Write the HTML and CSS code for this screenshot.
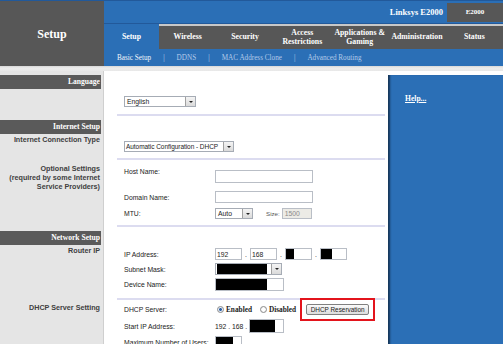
FILE: index.html
```html
<!DOCTYPE html>
<html lang="en">
<head>
    <meta charset="UTF-8">
    <title>Linksys E2000 - Basic Setup</title>
    <link rel="stylesheet" href="styles.css">
</head>
<body>

    <!-- Masthead: page title, model and tabs -->
    <header class="masthead">
        <div class="brand">Setup</div>
        <div class="nav">
            <div class="topbar">
                <span class="model">Linksys E2000</span>
                <span class="model-box">E2000</span>
            </div>
            <div class="tabs">
                <div class="tab active">Setup</div>
                <div class="tab">Wireless</div>
                <div class="tab">Security</div>
                <div class="tab">Access<br>Restrictions</div>
                <div class="tab">Applications &amp;<br>Gaming</div>
                <div class="tab">Administration</div>
                <div class="tab">Status</div>
            </div>
            <div class="subnav">
                <span class="current">Basic Setup</span>
                <span class="sep">|</span>
                <span>DDNS</span>
                <span class="sep">|</span>
                <span>MAC Address Clone</span>
                <span class="sep">|</span>
                <span>Advanced Routing</span>
            </div>
        </div>
    </header>

    <div class="strip"></div>

    <main class="settings">
        <aside class="help"><a href="#">Help...</a></aside>

        <!-- Language -->
        <div class="side">
            <div class="section-title">Language</div>
        </div>
        <div class="fields lang">
            <div class="select w-lang"><span class="value">English</span><span class="arrow"></span></div>
        </div>

        <!-- Internet setup -->
        <div class="side">
            <div class="section-title">Internet Setup</div>
            <div class="side-label">Internet Connection Type</div>
        </div>
        <div class="fields conn">
            <div class="select w-conn"><span class="value">Automatic Configuration - DHCP</span><span class="arrow"></span></div>
        </div>

        <div class="side">
            <div class="side-label optional">Optional Settings<br>(required by some Internet<br>Service Providers)</div>
        </div>
        <div class="fields optional-fields">
            <div class="row host">
                <label>Host Name:</label>
                <div class="box w-name"></div>
            </div>
            <div class="row domain">
                <label>Domain Name:</label>
                <div class="box w-name short"></div>
            </div>
            <div class="row mtu">
                <label>MTU:</label>
                <div class="select w-mtu"><span class="value">Auto</span><span class="arrow"></span></div>
                <span class="size-label">Size:</span>
                <div class="box disabled">1500</div>
            </div>
        </div>

        <!-- Network setup -->
        <div class="side">
            <div class="section-title">Network Setup</div>
            <div class="side-label">Router IP</div>
        </div>
        <div class="fields network">
            <div class="row ip">
                <label>IP Address:</label>
                <div class="box octet">192</div>
                <span class="dot">.</span>
                <div class="box octet">168</div>
                <span class="dot">.</span>
                <div class="box octet"><span class="redact r-3"></span></div>
                <span class="dot">.</span>
                <div class="box octet"><span class="redact r-4"></span></div>
            </div>
            <div class="row subnet">
                <label>Subnet Mask:</label>
                <div class="select w-mask"><span class="value"><span class="redact r-mask"></span></span><span class="arrow"></span></div>
            </div>
            <div class="row device">
                <label>Device Name:</label>
                <div class="box w-device"><span class="redact r-device"></span></div>
            </div>
        </div>

        <div class="side">
            <div class="side-label dhcp">DHCP Server Setting</div>
        </div>
        <div class="fields dhcp-fields">
            <div class="row server">
                <label>DHCP Server:</label>
                <span class="radio checked"></span><span class="radio-text">Enabled</span>
                <span class="radio off"></span><span class="radio-text">Disabled</span>
                <span class="highlight"><button class="reserve" type="button">DHCP Reservation</button></span>
            </div>
            <div class="row start">
                <label>Start IP Address:</label>
                <span class="prefix">192 . 168 .</span>
                <div class="box w-start"><span class="redact r-start"></span></div>
            </div>
            <div class="row users">
                <label>Maximum Number of Users:</label>
                <div class="box octet"><span class="redact r-users"></span></div>
            </div>
        </div>
    </main>

</body>
</html>
```

FILE: styles.css
```css
/* Colours */
:root {
    --blue: #2b6fb6;
    --blue-dark: #22599a;
    --gray: #575757;
    --side-bg: #e5e5e5;
    --rule: #dcdcf0;
}

body {
    margin: 0;
    width: 503px;
    height: 344px;
    overflow: hidden;
    background: #fff;
    font-family: "Liberation Sans", Arial, sans-serif;
    font-size: 6.8px;
    color: #222;
}

/* Masthead */
.masthead {
    display: flex;
    height: 65px;
    border-top: 1px solid var(--blue-dark);
}

.brand {
    width: 104px;
    background: var(--gray);
    color: #fff;
    font: bold 12px "Liberation Serif", serif;
    display: flex;
    align-items: center;
    justify-content: center;
    padding-top: 2px;
    box-sizing: border-box;
}

.nav {
    flex: 1;
    display: flex;
    flex-direction: column;
}

.topbar {
    height: 22px;
    background: var(--blue);
    border-bottom: 1px solid var(--blue-dark);
    display: flex;
    align-items: center;
    justify-content: flex-end;
}

.model {
    color: #fff;
    font: bold 8.5px "Liberation Serif", serif;
    margin-right: 4px;
}

.model-box {
    width: 56px;
    height: 19px;
    background: var(--gray);
    color: #fff;
    font: bold 7px "Liberation Serif", serif;
    display: flex;
    align-items: center;
    justify-content: center;
}

.tabs {
    height: 25px;
    display: flex;
}

.tab {
    flex: 1 1 0;
    background: var(--gray);
    border-top: 2px solid #c8c8c8;
    color: #fff;
    font: bold 7.8px "Liberation Serif", serif;
    line-height: 8.5px;
    text-align: center;
    display: flex;
    align-items: center;
    justify-content: center;
    white-space: nowrap;
}

.tab.active {
    flex: 0 0 55px;
    background: var(--blue);
    border-top-color: var(--blue);
}

.subnav {
    height: 17px;
    background: var(--blue);
    display: flex;
    align-items: center;
    padding-left: 13px;
    font: 7.2px "Liberation Serif", serif;
    color: #b3cae9;
}

.subnav .current {
    color: #f2f6fb;
}

.subnav .sep {
    margin: 0 12px;
    color: #c2d4ec;
}

.strip {
    height: 5px;
    background: linear-gradient(#d6d6d6, #ececec 40%, #e8e8e8);
}

/* Settings grid */
.settings {
    display: grid;
    grid-template-columns: 104px 284px 1fr;
}

.side {
    grid-column: 1;
    background: var(--side-bg);
    padding-right: 3px;
    box-shadow: inset -1px 0 #cfcfcf;
}

.section-title {
    margin-top: 4px;
    height: 14px;
    background: #5a5a5a;
    color: #fff;
    font: bold 7.6px/14px "Liberation Serif", serif;
    text-align: right;
    padding-right: 1px;
}

.side-label {
    font-weight: bold;
    font-size: 7.2px;
    line-height: 9px;
    color: #404040;
    text-align: right;
    padding-right: 1px;
}

.section-title + .side-label {
    margin-top: 1px;
}

.side-label.optional {
    padding-top: 4px;
}

.side-label.dhcp {
    padding-top: 3px;
}

.fields {
    grid-column: 2;
    margin: 0 3px 0 13px;
    padding-left: 7px;
    border-bottom: 2px solid var(--rule);
}

.fields.lang {
    padding-top: 25px;
    padding-bottom: 7px;
}

.fields.conn {
    padding-top: 25px;
    padding-bottom: 6px;
}

.fields.optional-fields {
    padding-top: 10px;
    padding-bottom: 6px;
}

.fields.network {
    padding-top: 21px;
    padding-bottom: 7px;
}

.fields.dhcp-fields {
    padding-top: 4px;
    border-bottom: none;
}

.help {
    grid-column: 3;
    grid-row: 1 / 6;
    margin-top: 4px;
    background: var(--blue);
    box-shadow: inset 3px 0 2px -1px #163659;
    padding: 19px 0 0 17px;
}

.help a {
    color: #fff;
    font: bold 7.6px "Liberation Serif", serif;
    text-decoration: underline;
}

/* Form rows */
.row {
    display: flex;
    align-items: center;
}

.row label {
    width: 91px;
    flex: none;
}

.row.host { height: 13px; margin-bottom: 8px; align-items: flex-start; }
.row.host label { margin-top: -2px; }
.row.domain { height: 12px; margin-bottom: 5px; }
.row.mtu { height: 11px; }
.row.ip { height: 12px; margin-bottom: 3px; }
.row.subnet { height: 12px; margin-bottom: 3px; }
.row.device { height: 13px; }
.row.server { height: 11px; margin-bottom: 4px; }
.row.start { height: 14px; margin-bottom: 3px; }
.row.users { height: 12px; }

.box {
    height: 100%;
    box-sizing: border-box;
    border: 1px solid #b9bec6;
    background: #fff;
    display: flex;
    align-items: center;
    padding-left: 1px;
    font-size: 6.8px;
    flex: none;
}

.box.w-name { width: 98px; }
.box.octet { width: 27px; }
.box.w-device { width: 69px; }
.box.w-start { width: 35px; }

.box.disabled {
    width: 30px;
    background: #ecebe6;
    color: #8a8a8a;
    padding-left: 2px;
}

.select {
    display: flex;
    height: 11px;
    box-sizing: border-box;
    border: 1px solid #a6acb5;
    background: #fff;
    flex: none;
}

.select .value {
    flex: 1;
    padding-left: 2px;
    line-height: 9px;
    white-space: nowrap;
    display: flex;
    align-items: center;
}

.select .arrow {
    width: 9px;
    flex: none;
    border-left: 1px solid #a0a0a0;
    background: linear-gradient(#f4f4f4, #dadada);
    display: flex;
    align-items: center;
    justify-content: center;
}

.select .arrow::after {
    content: "";
    border-left: 2px solid transparent;
    border-right: 2px solid transparent;
    border-top: 2px solid #222;
}

.select.w-lang { width: 72px; }
.select.w-conn { width: 110px; }
.select.w-conn .value { padding-left: 1px; font-size: 6.5px; letter-spacing: -0.05px; }
.select.w-mtu { width: 38px; }
.select.w-mask { width: 67px; height: 12px; }
.select.w-mask .value { padding-left: 1px; }

.size-label {
    margin: 0 2px 0 13px;
    font-size: 6.2px;
    color: #555;
}

.dot {
    width: 8px;
    text-align: center;
    flex: none;
}

.prefix {
    margin-right: 2px;
}

/* Redacted values */
.redact {
    display: block;
    height: 100%;
    background: #000;
}

.box .redact { margin-left: -1px; }
.r-3 { width: 8px; }
.r-4 { width: 11px; }
.r-mask { width: 50px; }
.r-device { width: 51px; }
.r-start { width: 25px; }
.r-users { width: 17px; }

/* Radios and button */
.radio {
    width: 7px;
    height: 7px;
    border-radius: 50%;
    border: 1px solid #8b8b8b;
    box-sizing: border-box;
    background: radial-gradient(circle, #fff 40%, #e2e2e2);
    margin-left: 2px;
    flex: none;
}

.radio.checked {
    background: radial-gradient(circle, #2d5fa5 35%, #e8eef6 45%);
}

.radio.off {
    margin-left: 8px;
}

.radio-text {
    font: bold 7.3px "Liberation Serif", serif;
    margin-left: 2px;
}

/* red marker drawn round the reservation button */
.highlight {
    margin: -6px 0 -6px 4px;
    padding: 4px;
    border: 2px solid #e3141c;
    display: flex;
}

.reserve {
    width: 63px;
    height: 11px;
    padding: 0;
    border: 1px solid #808080;
    border-radius: 2px;
    background: linear-gradient(#fbfbfb, #dcdcdc);
    font: 6.4px "Liberation Sans", Arial, sans-serif;
    color: #222;
}
```
